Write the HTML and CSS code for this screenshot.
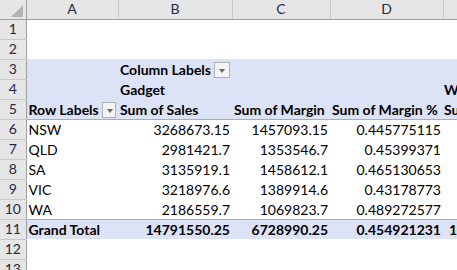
FILE: index.html
```html
<!DOCTYPE html>
<html>
	<head>
		<meta charset="utf-8">
		<title>Pivot</title>
		<link rel="stylesheet" href="styles.css">
	</head>
	<body>
		<table class="sheet">
			<colgroup>
				<col class="c-rh">
				<col class="c-a">
				<col class="c-b">
				<col class="c-c">
				<col class="c-d">
				<col class="c-e">
			</colgroup>
			<tr class="colhead">
				<th class="corner"><span class="tri"></span></th>
				<th>A</th>
				<th>B</th>
				<th>C</th>
				<th>D</th>
				<th class="last"></th>
			</tr>
			<tr><th class="rh">1</th><td></td><td></td><td></td><td></td><td></td></tr>
			<tr><th class="rh">2</th><td></td><td></td><td></td><td></td><td></td></tr>
			<tr class="pv">
				<th class="rh">3</th>
				<td></td>
				<td class="b"><div class="lbl">Column Labels <span class="dd"></span></div></td>
				<td></td><td></td><td></td>
			</tr>
			<tr class="pv">
				<th class="rh">4</th>
				<td></td>
				<td class="b">Gadget</td>
				<td></td><td></td>
				<td class="b e">W</td>
			</tr>
			<tr class="pv hdr">
				<th class="rh">5</th>
				<td class="b"><div class="lbl">Row Labels <span class="dd"></span></div></td>
				<td class="b">Sum of Sales</td>
				<td class="b">Sum of Margin</td>
				<td class="b">Sum of Margin %</td>
				<td class="b e">Su</td>
			</tr>
			<tr><th class="rh">6</th><td>NSW</td><td class="n">3268673.15</td><td class="n">1457093.15</td><td class="n">0.445775115</td><td></td></tr>
			<tr><th class="rh">7</th><td>QLD</td><td class="n">2981421.7</td><td class="n">1353546.7</td><td class="n">0.45399371</td><td></td></tr>
			<tr><th class="rh">8</th><td>SA</td><td class="n">3135919.1</td><td class="n">1458612.1</td><td class="n">0.465130653</td><td></td></tr>
			<tr><th class="rh">9</th><td>VIC</td><td class="n">3218976.6</td><td class="n">1389914.6</td><td class="n">0.43178773</td><td></td></tr>
			<tr><th class="rh">10</th><td>WA</td><td class="n">2186559.7</td><td class="n">1069823.7</td><td class="n">0.489272577</td><td></td></tr>
			<tr class="pv total">
				<th class="rh">11</th>
				<td class="b">Grand Total</td>
				<td class="b n">14791550.25</td>
				<td class="b n">6728990.25</td>
				<td class="b n">0.454921231</td>
				<td class="b e one">1</td>
			</tr>
			<tr><th class="rh">12</th><td></td><td></td><td></td><td></td><td></td></tr>
			<tr><th class="rh">13</th><td></td><td></td><td></td><td></td><td></td></tr>
		</table>
	</body>
</html>
```

FILE: styles.css
```css
*{
	margin: 0;
	padding: 0;
	box-sizing: border-box;
}
body{
	background: #fff;
	font-family: Lato, "Liberation Sans", sans-serif;
	font-size: 14px;
	color: #000;
	overflow: hidden;
}
.sheet{
	border-collapse: collapse;
	table-layout: fixed;
	width: 457px;
}
.c-rh{ width: 26px; }
.c-a{ width: 92px; }
.c-b{ width: 114px; }
.c-c{ width: 98px; }
.c-d{ width: 113px; }
.c-e{ width: 14px; }

.sheet td, .sheet th{
	height: 20px;
	padding: 0 2px;
	white-space: nowrap;
	overflow: hidden;
	vertical-align: bottom;
	line-height: 18px;
	font-weight: normal;
	text-align: left;
}
.colhead th{
	height: 19px;
	background: #e6e6e6;
	color: #1f2a44;
	text-align: center;
	vertical-align: middle;
	line-height: 18px;
	border-right: 1px solid #c8c8c8;
	border-bottom: 1px solid #9e9e9e;
}
.colhead th.corner{
	position: relative;
	border-right: 1px solid #9e9e9e;
}
.colhead th.last{
	border-right: none;
}
.tri{
	position: absolute;
	right: 3px;
	bottom: 2px;
	width: 0;
	height: 0;
	border-left: 12px solid transparent;
	border-bottom: 12px solid #b4b4b4;
}
.sheet th.rh{
	background: #e6e6e6;
	color: #1f2a44;
	text-align: center;
	padding: 0;
	border-right: 1px solid #9e9e9e;
	border-bottom: 1px solid #c8c8c8;
	vertical-align: middle;
}
.pv td{
	background: #dde3f6;
}
.hdr td{
	border-bottom: 1px solid #95b0de;
}
.total td{
	border-top: 1px solid #95b0de;
}
.sheet .b{
	font-weight: bold;
}
.sheet td.n{
	text-align: right;
}
.sheet td.e{
	padding: 0 0 0 1px;
	overflow: visible;
}
.sheet td.one{
	padding-left: 6px;
}
.lbl{
	display: flex;
	align-items: center;
	gap: 3px;
}
.dd{
	position: relative;
	display: inline-block;
	width: 16px;
	height: 16px;
	background: #f4f4f4;
	border: 1px solid #b0b0b0;
}
.dd::after{
	content: "";
	position: absolute;
	left: 4px;
	top: 6px;
	border-left: 3px solid transparent;
	border-right: 3px solid transparent;
	border-top: 4px solid #6a6a6a;
}
```
